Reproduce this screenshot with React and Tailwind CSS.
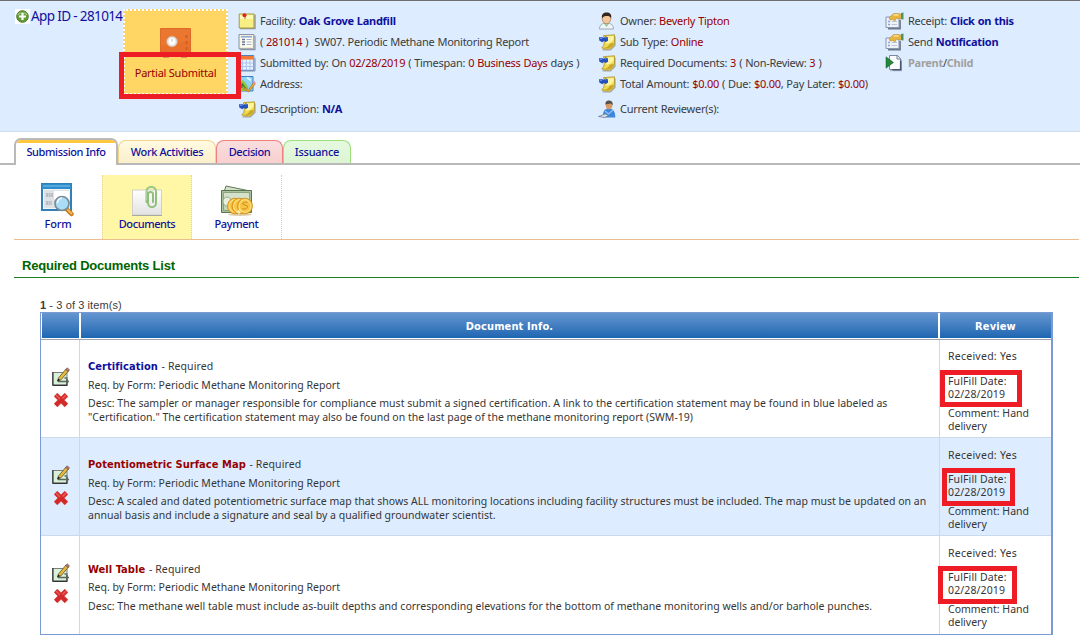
import React from "react";

const Svg = ({ w = 18, h = 18, vb = "0 0 18 18", children }) => (
  <svg width={w} height={h} viewBox={vb} fill="none" className="block shrink-0">
    {children}
  </svg>
);

const StickyIcon = () => (
  <Svg>
    <path d="M2 16.5h15v-14" stroke="#8d96a8" strokeWidth="1.4" />
    <path d="M1.2 2h14.8v14H1.2z" fill="#f7ee84" stroke="#a79a3c" />
    <path d="M2 3h13v4H2z" fill="#fdf9b8" />
    <circle cx="6.5" cy="3.2" r="2" fill="#e0241b" />
    <path d="M7 5v2" stroke="#8a7a50" />
  </Svg>
);
const ListIcon = () => (
  <Svg>
    <path d="M2 16.7h15v-14" stroke="#8d96a8" strokeWidth="1.2" />
    <path d="M1 1.5h14.8v14.3H1z" fill="#f2efd4" stroke="#8b93a6" />
    <path d="M2.6 3.3h11.6v10.5H2.6z" fill="#fffef6" />
    <path d="M3 3.8h11" stroke="#8aa5dc" strokeWidth="1.5" />
    <path d="M4 6.5h3M4 9h3M4 11.5h3" stroke="#6d7690" strokeWidth="1.4" />
    <path d="M8.5 6.5h5M8.5 9h5M8.5 11.5h5" stroke="#a9b1c4" />
  </Svg>
);
const CalendarIcon = () => (
  <Svg>
    <path d="M1 1.5h14.8v14.8H1z" fill="#e9f3ff" stroke="#4f80c4" />
    <path d="M1.5 2h13.8v3.6H1.5z" fill="#f0793a" />
    <path d="M4.5 6v10M8.3 6v10M12 6v10M1.5 9h14M1.5 12.5h14" stroke="#a7c5ee" />
    <path d="M2 17h15V4" stroke="#7d8eb0" />
  </Svg>
);
const MapIcon = () => (
  <Svg>
    <path d="M1 1.500h14v14.500H1z" fill="#8ed4f1" stroke="#3d7fc2" />
    <path d="M1.500 9l3-4 3 3 3 5-3 3H1.500z" fill="#8cc63a" />
    <path d="M4 8.500l4 5.500M4 8.500v4.500" stroke="#3a6c34" strokeWidth="1.200" />
    <path d="M9 2.500l4 3" stroke="#e4f6ff" strokeWidth="2" />
    <path d="M6.500 12.500l4 2.500 5-7.500 1.800 1.300L10.500 17 6 14z" fill="#f4ad35" stroke="#a76b1f" strokeWidth=".7" />
    <path d="M14.500 7.500l1.200-1.800 2 1.600-1.400 1.800z" fill="#dc8db4" />
  </Svg>
);
const PinNoteIcon = () => (
  <Svg>
    <path d="M4.500 16.800l8 .2 4.500-4.500V3.500" stroke="#a2a9b5" strokeWidth="1.200" />
    <path d="M5.500 2.600l11-.8v8.500c-.4 3-3 5.700-6 6-3 .2-5-.5-6.800-1.600C6 13.500 6.500 11 6 8z" fill="#eed94f" stroke="#a58a20" strokeWidth=".7" />
    <path d="M8.500 3.500l7.200-.5v3.500L12 10l-4 .8z" fill="#fbf4a2" />
    <path d="M4.500 14.700C8 15 11 13.500 12 10.500l4-.5c-.6 4-5 7-11.500 4.700z" fill="#c8a727" />
    <path d="M1 4.300l2.800-.4 1.900 1 2-1.700 2.300 1.300v3.200l-2.200 1.200-2-.9-1.600 1.200L1.300 7.500z" fill="#2451bd" />
    <path d="M2 5l2 .3M7.500 4.200l1 1" stroke="#8fb0f2" />
  </Svg>
);
const OwnerIcon = () => (
  <Svg>
    <path d="M1.500 17c0-4 2.500-6 7-6s7 2 7 6z" fill="#eff4f4" stroke="#8fa3ae" strokeWidth=".9" />
    <path d="M6 11l2.500 3.500L11 11" fill="#a5d3b3" stroke="#78a88c" strokeWidth=".6" />
    <ellipse cx="8.500" cy="6.700" rx="4.300" ry="5" fill="#f3c79c" stroke="#a8784f" strokeWidth=".7" />
    <path d="M4 6.200C3.200 2.500 5.500.6 8.700.6s5.300 2 4.400 5.600C12 4.500 11 4 9.500 4 7.500 4 5.500 4 4 6.200z" fill="#33261a" />
  </Svg>
);
const ReviewerIcon = () => (
  <Svg>
    <path d="M5 17.500c-.3-5.500 1-9 5.500-9 4.800 0 6.800 3 6.800 9z" fill="#3f86dd" />
    <path d="M7 11l3.500 3L15 10" stroke="#8ec1f7" strokeWidth="1.300" />
    <ellipse cx="11" cy="5" rx="3.400" ry="4.200" fill="#d99a64" />
    <path d="M7.500 4.500C7 1.800 9 .3 11.300.5c2.700.2 3.900 2.300 3.200 5L13 3.500c-2 .6-4 .3-5.500 1z" fill="#55504c" />
    <path d="M.5 16.500l7-2.500 3 1.500-4 2z" fill="#dde5ee" stroke="#6f7f92" strokeWidth=".8" />
  </Svg>
);
const PropertiesIcon = () => (
  <Svg w={19} vb="0 0 19 18">
    <path d="M3 16.500h12V8" stroke="#6f7889" strokeWidth="1.800" />
    <path d="M1 5h13v10.500H1z" fill="#eef2fa" stroke="#8795b0" />
    <path d="M3 9.500h2M3 12.500h2" stroke="#8fa5cf" strokeWidth="1.500" />
    <path d="M6.500 9.500h5.500M6.500 12.500h5.500" stroke="#bcc5d6" />
    <path d="M4 5.800L8.500 1.500h5l4 1.200v4.300L13 6.800 11.500 6l-1.500 3L7.500 7.500 5 8z" fill="#e7b43c" stroke="#a88434" strokeWidth=".5" />
    <path d="M8.500 3h5" stroke="#fbe6a0" strokeWidth="1.300" />
    <path d="M16 1l2.500-.5V7.500L16 7z" fill="#4f9468" />
  </Svg>
);
const ParentIcon = () => (
  <Svg>
    <path d="M5 2.500h8.500L17 6v11.300H5z" fill="#b4bccb" />
    <path d="M4.500 1.500h8l3 3.200V15.500h-11z" fill="#fbfcfe" stroke="#7a88a2" />
    <path d="M12 1.500v3.500h3.500" stroke="#6e7c94" />
    <path d="M7.500 15.700h8.200v-9" stroke="#47566f" strokeWidth="1.600" />
    <path d="M1 2.800L8.500 8.500 1 14.200z" fill="#23863a" stroke="#12602a" strokeWidth=".5" />
  </Svg>
);
const PlusIcon = () => (
  <Svg w={15} h={15} vb="0 0 15 15">
    <path d="M0 0h15v15H0z" fill="#fff" />
    <circle cx="7.500" cy="7.500" r="5.800" fill="#5f9a35" stroke="#4a7a2b" strokeWidth="1" />
    <path d="M3 6c1-3 8-3 9 0" stroke="#a5cf83" strokeWidth="1.200" />
    <path d="M7.500 4v7M4 7.500h7" stroke="#fff" strokeWidth="2.200" />
  </Svg>
);
const SafeIcon = () => (
  <Svg w={32} h={30} vb="0 0 32 30">
    <path d="M3 27h6v2.500H3zM21 27h6v2.500h-6z" fill="#a8643c" />
    <path d="M.5.500h30v26H.5z" fill="#e8702a" stroke="#dc6a28" />
    <path d="M1 1h29v12L1 18z" fill="#ec7a36" opacity=".6" />
    <path d="M26.500 7v3M26.500 13v3M26.500 19v3" stroke="#cf5e20" strokeWidth="2" />
    <circle cx="12" cy="13.500" r="5.300" fill="#e4e0dc" stroke="#c9b6a6" strokeWidth=".6" />
    <circle cx="12" cy="13.500" r="3.400" fill="#fff" />
    <path d="M12 11v2.500" stroke="#b5b0ab" strokeWidth=".9" />
  </Svg>
);
const FormIcon = () => (
  <Svg w={34} h={34} vb="0 0 34 34">
    <path d="M1 1h29v26H1z" fill="#f1f3f5" stroke="#2f7fb8" strokeWidth="2" />
    <path d="M1 1h29v5H1z" fill="#2f8dcb" />
    <path d="M2 3h27" stroke="#7cc3ee" />
    <path d="M3 7h25v18H3z" fill="#dfe2e5" />
    <path d="M13 8h15v8H13z" fill="#fff" />
    <path d="M5 11h7M5 13h7M5 19h6M5 21h6" stroke="#8e969e" strokeWidth="1.200" strokeDasharray="2 .6" />
    <path d="M26.500 27l4 4" stroke="#c87c1d" strokeWidth="4.500" strokeLinecap="round" />
    <path d="M27 27l3.500 3.500" stroke="#f2b754" strokeWidth="2" strokeLinecap="round" />
    <circle cx="21" cy="20.500" r="7" fill="#a9dcf7" stroke="#7d8a95" strokeWidth="1.700" />
    <path d="M16.500 20c0-3 2-4.800 4.500-4.800" stroke="#e8f7ff" strokeWidth="1.800" />
  </Svg>
);
const DocumentsIcon = () => (
  <Svg w={32} h={32} vb="0 0 32 32">
    <defs>
      <linearGradient id="paper" x1="0" y1="0" x2="0" y2="1">
        <stop stopColor="#fff" />
        <stop offset="1" stopColor="#e2e2e2" />
      </linearGradient>
    </defs>
    <path d="M1.500 5h29v25h-29z" fill="url(#paper)" stroke="#d0d0c8" />
    <path d="M1 30.500h30" stroke="#a9a99f" />
    <path d="M15.500 17V6.500c0-6 9.500-6 9.500 0V18c0 5.500-8 5.500-8 0V9.500c0-3.300 5-3.300 5 0V17" stroke="#8fbf7a" strokeWidth="2" strokeLinecap="round" />
    <path d="M15.500 15V6.500c0-6 9.500-6 9.500 0" stroke="#b9d8a8" strokeWidth=".7" />
  </Svg>
);
const Coin = ({ cx }) => (
  <>
    <ellipse cx={cx} cy="21" rx="7.500" ry="7.800" fill="#f2b02b" stroke="#d08c1a" strokeWidth=".8" />
    <ellipse cx={cx} cy="21" rx="6" ry="6.300" fill="#f9c545" stroke="#fde07a" strokeWidth="1.200" />
  </>
);
const PaymentIcon = () => (
  <Svg w={34} h={32} vb="0 0 34 32">
    <path d="M6 1l24 5-1 5L4 7z" fill="#d6e0c8" stroke="#5e7a56" />
    <path d="M1.500 5.500h30v22h-30z" fill="#a9c29b" stroke="#587450" />
    <path d="M3.500 7.500h26v8h-26z" fill="#d5e1ca" stroke="#7b9871" strokeWidth=".8" />
    <path d="M3.500 17h26v8.500h-26z" fill="#c4d5b6" stroke="#7b9871" strokeWidth=".8" />
    <ellipse cx="7" cy="16.500" rx="4" ry="4.500" fill="#e8efdf" stroke="#7b9871" strokeWidth=".8" />
    <ellipse cx="20" cy="29.500" rx="12" ry="1.500" fill="#b99a4a" opacity=".5" />
    <Coin cx={15} />
    <Coin cx={19.500} />
    <Coin cx={25} />
    <path d="M27.500 17.500c-2-1-4.500-.5-5 1.500l5 2c.5 2.500-3 4-5.500 2.500" stroke="#c98c22" strokeWidth="1" />
    <path d="M19 24.500v5M16.500 27h5" stroke="#fff8d0" />
  </Svg>
);
const EditIcon = () => (
  <Svg w={18} h={20} vb="0 0 18 20">
    <path d="M1 5.500h14v12.500H1z" fill="#d9f0d9" stroke="#7c7f7c" />
    <path d="M.8 5v13.500M.5 18.300h15M15 12v6.500" stroke="#343434" strokeWidth="1.200" />
    <path d="M6 14.500h11M12.500 11h3" stroke="#5a6a5a" strokeWidth="1.500" />
    <path d="M5.500 14l1-3L14 2l2.500 2L9 12.800z" fill="#e9b93c" stroke="#5a5032" strokeWidth=".8" />
    <path d="M13.500 2.500l1.500-1.700 2.500 1.900-1.500 2z" fill="#b97768" stroke="#6a514c" strokeWidth=".6" />
    <path d="M5 14.500l1.200-3 2 1.600z" fill="#222" />
  </Svg>
);
const DeleteIcon = () => (
  <Svg w={16} h={16} vb="0 0 16 16">
    <path d="M2.800 2.800l10.600 10.600M13.400 2.800L2.800 13.400" stroke="#eaa5a2" strokeWidth="5.400" />
    <path d="M2.600 2.600l10.800 10.800M13.400 2.600L2.600 13.400" stroke="#d22a2a" strokeWidth="4.400" />
    <path d="M3 3l4 4M13 3L9.500 6.500" stroke="#ea5c56" strokeWidth="1.500" />
  </Svg>
);

const Red = ({ children }) => <span className="text-[#980000]">{children}</span>;
const Blue = ({ children }) => <b className="font-bold text-[#10109c]">{children}</b>;

const Info = ({ icon, last, children }) => (
  <div className={`flex items-center gap-[4px] whitespace-pre tracking-[-0.27px] [word-spacing:0.4px] ${last ? "h-[29px]" : "h-[21px]"}`}>
    {icon}
    <span>{children}</span>
  </div>
);

const docs = [
  {
    name: "Certification",
    color: "text-[#10109c]",
    lines: [
      'Desc: The sampler or manager responsible for compliance must submit a signed certification. A link to the certification statement may be found in blue labeled as',
      '"Certification." The certification statement may also be found on the last page of the methane monitoring report (SWM-19)',
    ],
    pad: "pt-[17px]",
    gap1: "mt-[4px]",
    gap2: "mt-[4px]",
    box: "left-0 top-[30px] w-[82px] h-[37px]",
    bg: "bg-white",
    recv: "pt-[10px]",
    dateGap: "mt-[12px]",
  },
  {
    name: "Potentiometric Surface Map",
    color: "text-[#980000]",
    lines: [
      "Desc: A scaled and dated potentiometric surface map that shows ALL monitoring locations including facility structures must be included. The map must be updated on an",
      "annual basis and include a signature and seal by a qualified groundwater scientist.",
    ],
    pad: "pt-[17px]",
    gap1: "mt-[4px]",
    gap2: "mt-[4px]",
    box: "left-[2px] top-[30px] w-[73px] h-[38px]",
    bg: "bg-[#ddedff]",
    recv: "pt-[11px]",
    dateGap: "mt-[11px]",
  },
  {
    name: "Well Table",
    color: "text-[#980000]",
    lines: [
      "Desc: The methane well table must include as-built depths and corresponding elevations for the bottom of methane monitoring wells and/or barhole punches.",
    ],
    pad: "pt-[24px]",
    gap1: "mt-[3px]",
    gap2: "mt-[5px]",
    box: "left-[-2px] top-[30px] w-[79px] h-[38px]",
    bg: "bg-white",
    recv: "pt-[11px]",
    dateGap: "mt-[11px]",
  },
];

function DocRow({ doc, last }) {
  return (
    <div className={`flex h-[98px] text-[10.5px] text-[#363636] ${last ? "" : "border-b border-[#c9daee]"} ${doc.bg}`}>
      <div className="flex w-[39px] shrink-0 flex-col items-center gap-[5px] border-r border-[#c9daee] pl-[2px] pt-[27px]">
        <EditIcon />
        <DeleteIcon />
      </div>
      <div className={`w-[860px] shrink-0 whitespace-nowrap border-r border-[#c9daee] pl-[8px] leading-[14px] tracking-[0.02px] ${doc.pad}`}>
        <p className="pt-[2px]">
          <b className={`mr-[1px] font-['DejaVu_Sans_Condensed','DejaVu_Sans',sans-serif] text-[11px] font-bold tracking-[0.05px] ${doc.color}`}>{doc.name}</b> <span className="tracking-[0.1px]">- Required</span>
        </p>
        <p className={doc.gap1}>Req. by Form: Periodic Methane Monitoring Report</p>
        <div className={doc.gap2}>
          {doc.lines.map((line) => (
            <p key={line}>{line}</p>
          ))}
        </div>
      </div>
      <div className={`relative grow pl-[8px] leading-[13px] tracking-[0.12px] ${doc.recv}`}>
        <p className="tracking-[0.25px]">Received: Yes</p>
        <p className={doc.dateGap}>FulFill Date:<br />02/28/2019</p>
        <p className="mt-[6px] tracking-[0px]">Comment: Hand<br />delivery</p>
        <div className={`absolute border-[5px] border-[#ee1c25] ${doc.box}`} />
      </div>
    </div>
  );
}

export default function App() {
  return (
    <div className="h-[641px] w-[1080px] overflow-hidden bg-white font-['Noto_Sans',sans-serif] text-[11px] leading-[14px] text-[#3c3c3c]">
      <header className="relative flex h-[132px] border-t border-b border-t-[#6e6e6e] border-b-[#cfdcea] bg-[#ddedff]">
        <div className="flex w-[123px] shrink-0 items-start whitespace-nowrap pl-[15px] pt-[8px] text-[13.5px] leading-[15px] tracking-[-0.63px] text-[#10109c]">
          <PlusIcon />
          <span className="pl-px">App ID - 281014</span>
        </div>
        <div className="mt-[8px] flex h-[86px] w-[105px] shrink-0 flex-col items-center border-2 border-dotted border-white bg-[#ffd564] pt-[17px] tracking-[-0.25px] text-[#980000]">
          <SafeIcon />
          <span className="mt-[8px] whitespace-nowrap">Partial Submittal</span>
        </div>
        <div className="ml-[10px] w-[360px] shrink-0 pt-[9px]">
          <Info icon={<StickyIcon />}>Facility: <Blue>Oak Grove Landfill</Blue></Info>
          <Info icon={<ListIcon />}>( <Red>281014</Red> )  SW07. Periodic Methane Monitoring Report</Info>
          <Info icon={<CalendarIcon />}>Submitted by: On <Red>02/28/2019</Red> ( Timespan: <Red>0 Business Days</Red> days )</Info>
          <Info icon={<MapIcon />}>Address:</Info>
          <Info last icon={<PinNoteIcon />}>Description: <Blue>N/A</Blue></Info>
        </div>
        <div className="w-[287px] shrink-0 pt-[9px]">
          <Info icon={<OwnerIcon />}>Owner: <Red>Beverly Tipton</Red></Info>
          <Info icon={<PinNoteIcon />}>Sub Type: <Red>Online</Red></Info>
          <Info icon={<PinNoteIcon />}>Required Documents: <Red>3</Red> ( Non-Review: <Red>3</Red> )</Info>
          <Info icon={<PinNoteIcon />}>Total Amount: <Red>$0.00</Red> ( Due: <Red>$0.00</Red>, Pay Later: <Red>$0.00</Red>)</Info>
          <Info last icon={<ReviewerIcon />}>Current Reviewer(s):</Info>
        </div>
        <div className="grow pt-[9px]">
          <Info icon={<PropertiesIcon />}>Receipt: <Blue>Click on this</Blue></Info>
          <Info icon={<PropertiesIcon />}>Send <Blue>Notification</Blue></Info>
          <Info icon={<ParentIcon />}>
            <span className="pl-px"><b className="text-[#a0a0a0]">Parent</b>/<b className="text-[#a0a0a0]">Child</b></span>
          </Info>
        </div>
        <div className="absolute left-[119px] top-[51px] h-[47px] w-[122px] border-[5px] border-[#ee1c25]" />
      </header>

      <nav className="flex h-[33px] items-end pt-[6px] text-center font-medium tracking-[-0.37px] text-[#10109c]">
        <div className="h-[2px] w-[14px] bg-[#b9b9b9]" />
        <div className="h-[27px] w-[104px] overflow-hidden rounded-t-[7px] border-2 border-b-0 border-[#b9b9b9] bg-white">
          <div className="h-[3px] bg-[#ffc83c]" />
          <div className="pt-[2px]">Submission Info</div>
        </div>
        <div className="flex h-[25px] grow border-b-2 border-[#b9b9b9]">
          <div className="w-[98px] rounded-t-[8px] border border-b-0 border-[#f0d488] bg-linear-to-b from-[#fffbe2] to-[#fbeecb] pt-[4px]">Work Activities</div>
          <div className="w-[67px] rounded-t-[8px] border border-b-0 border-[#ee7f7f] bg-linear-to-b from-[#f9dede] to-[#f8cfcf] pt-[4px]">Decision</div>
          <div className="w-[68px] rounded-t-[8px] border border-b-0 border-[#9ce07c] bg-linear-to-b from-[#e6f9e0] to-[#dcf5d4] pt-[4px] tracking-[-0.25px]">Issuance</div>
        </div>
      </nav>

      <nav className="ml-[14px] mt-[10px] flex h-[65px] w-[1065px] border-b border-[#ecc08e] text-center font-medium tracking-[-0.4px] text-[#10109c]">
        <div className="flex w-[88px] flex-col items-center pt-[8px]">
          <FormIcon />
          <span className="tracking-[-0.2px]">Form</span>
        </div>
        <div className="flex w-[90px] flex-col items-center border-x border-dotted border-[#eccf9c] bg-[#fff6a6] pt-[10px]">
          <DocumentsIcon />
          <span>Documents</span>
        </div>
        <div className="flex w-[90px] flex-col items-center border-r border-dotted border-[#e8c8b0] pt-[10px]">
          <PaymentIcon />
          <span>Payment</span>
        </div>
      </nav>

      <h1 className="ml-[14px] mt-[18px] h-[20px] w-[1065px] border-b border-[#1b8022] pl-[8px] font-['Liberation_Sans',sans-serif] text-[13px] font-bold leading-[16px] tracking-[-0.2px] text-[#006400]">
        Required Documents List
      </h1>

      <p className="ml-[40px] mt-[21px] h-[13px] font-['Liberation_Sans',sans-serif] leading-[13px] tracking-[0.1px]"><b>1</b> - 3 of 3 item(s)</p>

      <section className="ml-[40px] h-[323px] w-[1013px] border-2 border-l border-t border-[#7b99d3]">
        <div className="flex h-[27px] border-b border-[#a2a2ac] pb-px pl-px text-center font-['DejaVu_Sans_Condensed','DejaVu_Sans',sans-serif] font-bold leading-[27px] tracking-[0.12px] text-white">
          <div className="w-[37px] bg-linear-to-b from-[#6496d0] to-[#1c66b2]" />
          <div className="ml-[2px] w-[857px] bg-linear-to-b from-[#6496d0] to-[#1c66b2]">Document Info.</div>
          <div className="ml-[2px] grow bg-linear-to-b from-[#6496d0] to-[#1c66b2]">Review</div>
        </div>
        {docs.map((doc, i) => (
          <DocRow key={doc.name} doc={doc} last={i === docs.length - 1} />
        ))}
      </section>
    </div>
  );
}
